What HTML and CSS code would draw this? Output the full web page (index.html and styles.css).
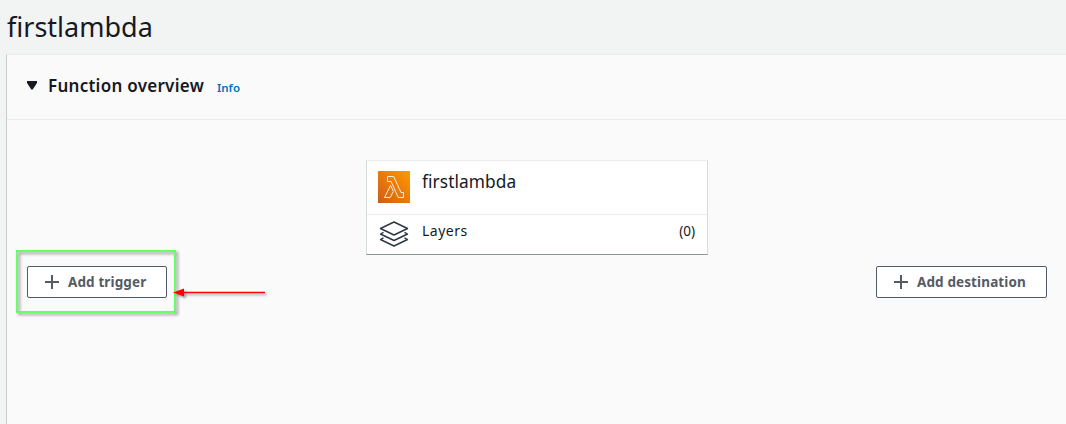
FILE: index.html
```html
<!DOCTYPE html>
<html lang="en">
<head>
<meta charset="utf-8">
<title>firstlambda</title>
<link rel="stylesheet" href="styles.css">
</head>
<body>
<h1 class="page-title"><span>firstlambda</span></h1>
<main class="panel">
  <header class="panel-header">
    <svg class="caret" width="10" height="9" viewBox="0 0 10 9"><path d="M0 0h10v2L5.700 8.500H4.300L0 2z" fill="#16191f"/></svg>
    <h2 class="panel-title">Function overview</h2>
    <a class="info">Info</a>
  </header>
  <section class="designer">
    <div class="side">
      <button class="btn btn-trigger">
        <svg width="14" height="14" viewBox="0 0 14 14"><path d="M7 0v14M0 7h14" stroke="#545b64" stroke-width="2"/></svg>
        <span class="trigger-label">Add trigger</span>
      </button>
      <div class="highlight"></div>
      <svg class="arrow" width="104" height="22" viewBox="0 0 104 22">
        <path d="M10 10.500H92" stroke="#f00" stroke-width="1.500"/>
        <path d="M0 10.500L11 6.500V14.500z" fill="#f00"/>
      </svg>
    </div>
    <div class="card">
      <div class="card-row card-function">
        <svg class="lambda" width="32" height="32" viewBox="0 0 32 32">
          <defs><linearGradient id="orange" x1="0" y1="1" x2="1" y2="0"><stop offset="0" stop-color="#d05c17"/><stop offset="1" stop-color="#f90"/></linearGradient></defs>
          <path d="M0 0h32v32H0z" fill="url(#orange)"/>
          <path d="M9.500 5.500h6.200l7.300 16h2.500v5h-5.200L13 10.500H9.500zM12.500 14.500l2.900 5.800-3.200 6.200H6.500z" fill="none" stroke="#fff" stroke-opacity=".85" stroke-linejoin="round"/>
        </svg>
        <span class="function-name">firstlambda</span>
      </div>
      <div class="card-row card-layers">
        <svg class="layers" width="30" height="26" viewBox="0 0 30 26">
          <g fill="none" stroke="#2b3645" stroke-width="1.400" stroke-linejoin="round"><path d="M15 1l13.500 6.500L15 14 1.500 7.500z"/><path d="M4.500 11.300L1.500 13 15 19.500 28.500 13l-3-1.700M4.500 16.800l-3 1.700L15 25l13.500-6.500-3-1.700"/></g>
        </svg>
        <span class="layers-label">Layers</span>
        <span class="layers-count">(0)</span>
      </div>
    </div>
    <div class="side side-right">
      <button class="btn btn-destination">
        <svg width="14" height="14" viewBox="0 0 14 14"><path d="M7 0v14M0 7h14" stroke="#545b64" stroke-width="2"/></svg>
        <span class="destination-label">Add destination</span>
      </button>
    </div>
  </section>
</main>
</body>
</html>
```
FILE: styles.css
```css
* { box-sizing: border-box; }
body {
  margin: 0;
  height: 424px;
  overflow: hidden;
  display: flex;
  flex-direction: column;
  background: #f2f3f3;
  color: #16191f;
  font-family: "Noto Sans", "Open Sans", sans-serif;
}
.page-title {
  margin: 0;
  height: 54px;
  padding-left: 7px;
  font-size: 27px;
  font-weight: 400;
  line-height: 54px;
}
.panel {
  flex: 1;
  margin-left: 6px;
  background: #fafafa;
  border-top: 1px solid #eaeded;
  border-left: 1px solid #c5cccc;
}
.panel-header {
  display: flex;
  align-items: center;
  height: 65px;
  padding: 0 20px 3px;
  border-bottom: 1px solid #eaeded;
}
.panel-title {
  margin: 0 13px 0 11px;
  font-size: 17px;
  font-weight: 600;
  line-height: 24px;
  letter-spacing: .27px;
}
.info {
  padding-top: 4px;
  color: #0073bb;
  font-size: 11.500px;
  font-weight: 600;
}
.designer {
  display: grid;
  grid-template-columns: 1fr 342px 1fr;
  padding: 40px 19px 0 20px;
}
.side { position: relative; padding-top: 106px; }
.side-right { display: flex; justify-content: flex-end; align-items: flex-start; }
.btn {
  display: flex;
  align-items: center;
  gap: 9px;
  height: 32px;
  padding: 0 0 0 17px;
  border: 1px solid #545b64;
  border-radius: 2px;
  background: #fff;
  color: #545b64;
  font: 700 13.500px/20px "Noto Sans", "Open Sans", sans-serif;
  letter-spacing: .12px;
}
.btn-trigger { width: 140px; }
.btn-destination { width: 171px; }
.highlight {
  position: absolute;
  left: -11px;
  top: 90px;
  width: 160px;
  height: 63px;
  border: 2px solid #6f6;
  filter: drop-shadow(2px 2px 1.500px rgba(0, 0, 0, .4));
}
.arrow {
  position: absolute;
  left: 146px;
  top: 122px;
  filter: drop-shadow(2px 2px 1px rgba(0, 0, 0, .35));
}
.card {
  height: 95px;
  background: #fff;
  border: 1px solid #d5dbdb;
  border-top-color: #eaeded;
  border-bottom-color: #879596;
}
.card-row { display: flex; padding: 0 11px 0 10px; }
.card-function { height: 54px; border-bottom: 1px solid #eaeded; }
.lambda { margin: 10px 12px 0 1px; }
.function-name { margin-top: 9px; font-size: 17.300px; line-height: 24px; letter-spacing: .08px; }
.layers { margin: 6px 13px 0 2px; }
.layers-label { margin-top: 5px; font-size: 14px; line-height: 22px; letter-spacing: .5px; }
.layers-count { margin: 5px 1px 0 auto; font-size: 13.500px; line-height: 22px; }
```
